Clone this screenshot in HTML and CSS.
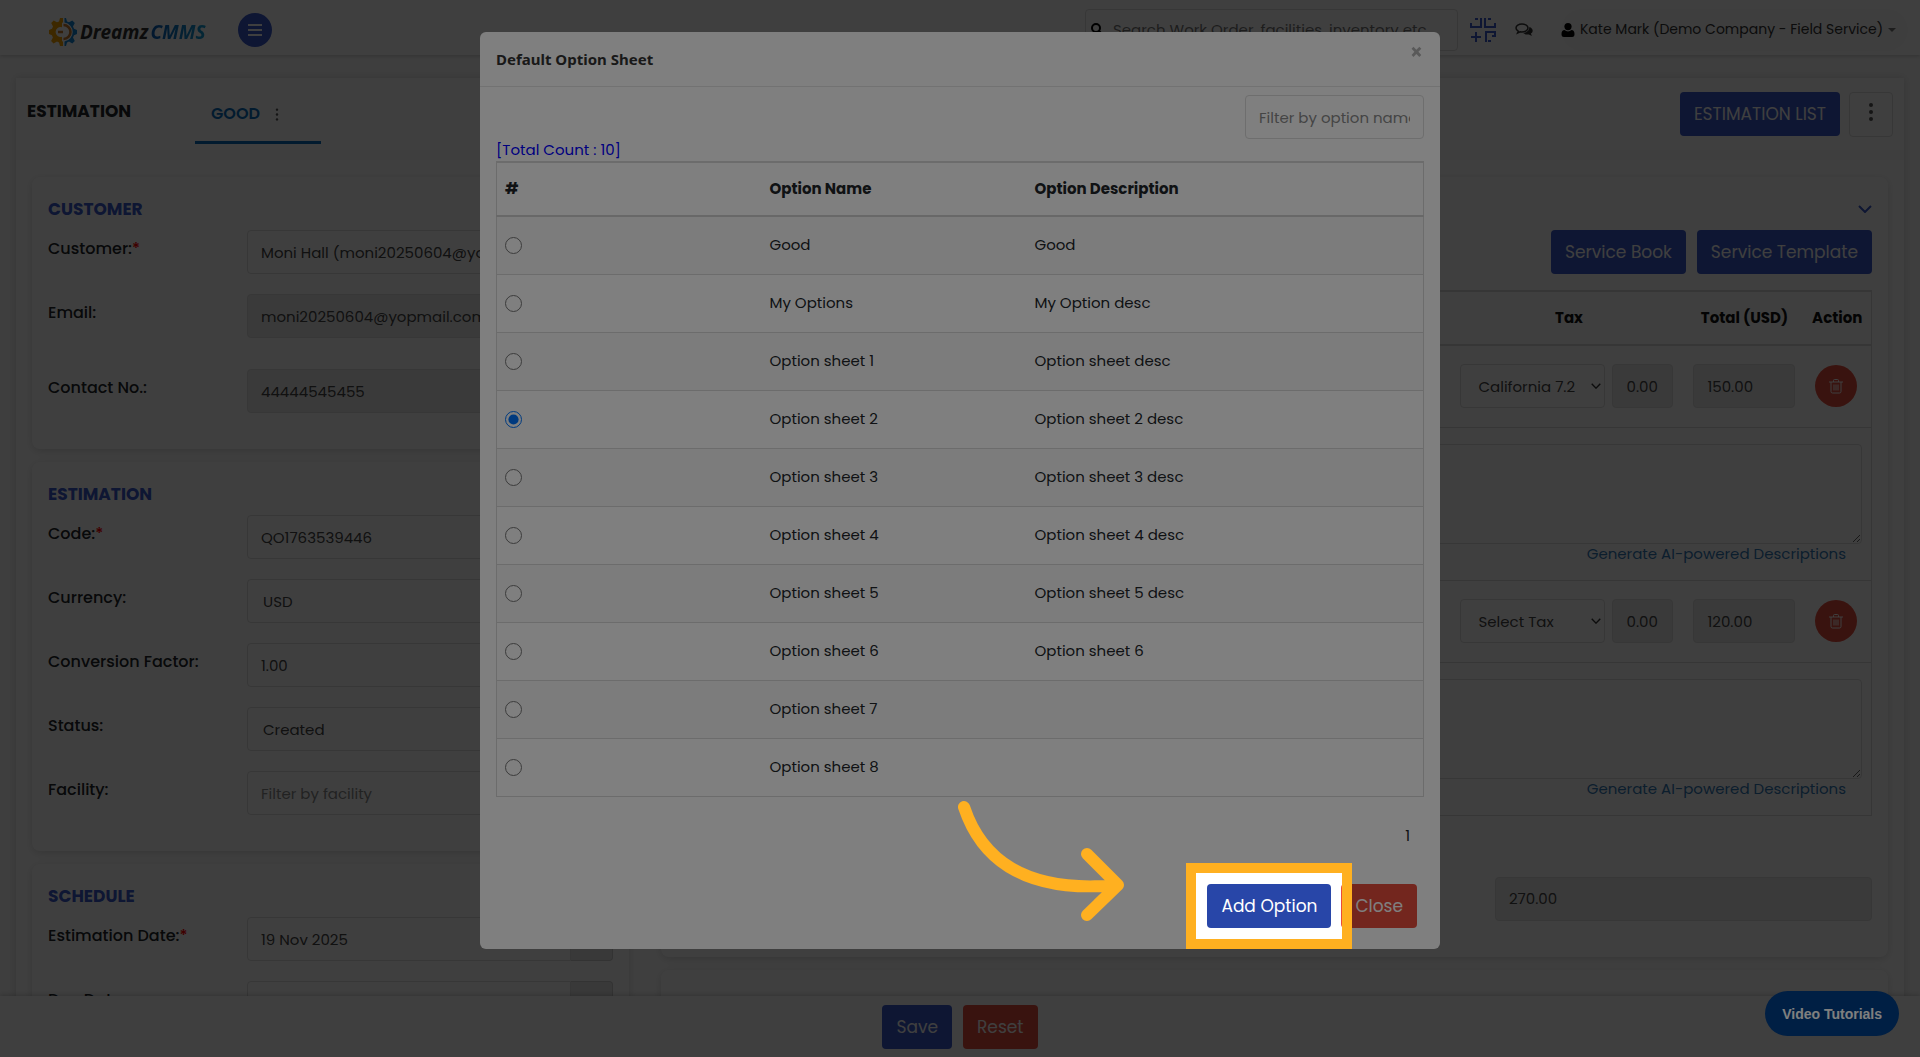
FILE: index.html
```html
<!DOCTYPE html>
<html lang="en">

<head>
    <meta charset="UTF-8">
    <meta name="viewport" content="width=device-width, initial-scale=1.0">
    <title>Dreamz CMMS - Estimation</title>
    <link rel="stylesheet" href="styles.css">
</head>

<body>

    <!-- Icons used more than once -->
    <svg class="icon-defs" aria-hidden="true">
        <symbol id="icon-trash" viewBox="0 0 16 16">
            <path d="M1 4h14M5.500 4V2.500a1 1 0 0 1 1-1h3a1 1 0 0 1 1 1V4M3 4v9.500a1.500 1.500 0 0 0 1.500 1.500h7a1.500 1.500 0 0 0 1.500-1.500V4M6 6.500v6M8 6.500v6M10 6.500v6" />
        </symbol>
        <symbol id="icon-chevron" viewBox="0 0 14 8">
            <path d="M1 1l6 6 6-6" />
        </symbol>
    </svg>

    <header class="topbar">
        <a class="logo" href="#">
            <svg class="logo-gear" viewBox="0 0 30 30" aria-hidden="true">
                <path fill="#f5a300" d="M15 1v4.500l-1 .2v4.500a5 5 0 1 0 0 9.600v4.500l1 .2V29h-3l-1-3.500-2-.9-3.500 1.800-2.400-2.500 1.800-3.300-1-2.400L1 17v-4l3-1.200 1-2.400L3.200 6 5.700 3.500 9 5.300l2-.9L12 1z" />
                <path fill="#1284d6" d="M16.500 1h1.500l1 3.400 2 .9 3.300-1.800L26.800 6 25 9.400l1 2.400 3 1.200v4l-3 1.200-1 2.400 1.800 3.300-2.500 2.500-3.300-1.800-2 .9L18 29h-1.500v-4.500a9.600 9.600 0 0 0 0-19z" />
                <path fill="none" stroke="#c9782c" stroke-width="2.600" d="M15.500 8a7 7 0 0 1 0 14M10 15h5" />
            </svg>
            <span class="logo-name">Dreamz</span>
            <span class="logo-product">CMMS</span>
        </a>
        <button class="menu-btn" type="button" aria-label="Menu">
            <svg viewBox="0 0 14 12" aria-hidden="true"><path d="M0 1h14M0 6h14M0 11h14" /></svg>
        </button>

        <div class="topbar-right">
            <div class="search">
                <svg viewBox="0 0 16 16" aria-hidden="true"><circle cx="6" cy="6" r="4" /><path d="M9 9l5 5" /></svg>
                <input type="text" placeholder="Search Work Order, facilities, inventory etc" aria-label="Search">
            </div>
            <svg class="scan-icon" viewBox="0 0 26 26" aria-hidden="true">
                <path d="M1 6V10H11V1M5 2H8M15 1V10H25V6M18 2H21M6 15V25M1 20H11M16 25V15H25V19H22M18 24H21" />
            </svg>
            <svg class="chat-icon" viewBox="0 0 18 14" aria-hidden="true">
                <path class="chat-line" d="M7 1C3.700 1 1 2.800 1 5c0 1.300.9 2.400 2.200 3.200L2.500 10l2.600-1.200C9.500 9.400 13 7.600 13 5c0-2.200-2.700-4-6-4z" />
                <path class="chat-fill" d="M14.300 4c2 .6 3.400 2 3.400 3.700 0 1.200-.7 2.200-1.800 2.900l1 2.400-3-1.500c-2.300.3-4.600-.3-5.700-1.500C11.800 9.700 14.500 7.500 14.300 4z" />
            </svg>
            <button class="user-btn" type="button">
                <svg class="user-icon" viewBox="0 0 14 14" aria-hidden="true"><circle cx="7" cy="3.600" r="3.600" /><path d="M.5 11c0-2.600 1.200-4 3-4a5 5 0 0 0 7 0c1.800 0 3 1.400 3 4 0 2-.6 3-2.500 3H3C1.100 14 .5 13 .5 11z" /></svg>
                Kate Mark (Demo Company - Field Service)
                <svg class="caret" viewBox="0 0 8 4" aria-hidden="true"><path d="M0 0h8L4 4z" /></svg>
            </button>
        </div>
    </header>

    <main class="page">
        <!-- Title and tabs -->
        <div class="page-head">
            <h1>ESTIMATION</h1>
            <div class="tab">
                <a href="#">GOOD</a>
                <svg class="dots dots-small" viewBox="0 0 4 16" aria-hidden="true"><circle cx="2" cy="2" r="1.500" /><circle cx="2" cy="8" r="1.500" /><circle cx="2" cy="14" r="1.500" /></svg>
            </div>
            <div class="page-actions">
                <button class="btn btn-primary" type="button">ESTIMATION LIST</button>
                <button class="more-btn" type="button" aria-label="More">
                    <svg class="dots" viewBox="0 0 4 18" aria-hidden="true"><circle cx="2" cy="2" r="2" /><circle cx="2" cy="9" r="2" /><circle cx="2" cy="16" r="2" /></svg>
                </button>
            </div>
        </div>

        <div class="page-body">
            <form class="side">
                <section class="card">
                    <h2>CUSTOMER</h2>
                    <div class="field">
                        <label for="customer">Customer:<span class="req">*</span></label>
                        <input class="control" type="text" id="customer" value="Moni Hall (moni20250604@yopmail.com)">
                    </div>
                    <div class="field field-tall">
                        <label for="email">Email:</label>
                        <input class="control" type="text" id="email" value="moni20250604@yopmail.com" readonly>
                    </div>
                    <div class="field">
                        <label for="contact">Contact No.:</label>
                        <input class="control" type="text" id="contact" value="44444545455" readonly>
                    </div>
                </section>

                <section class="card">
                    <h2>ESTIMATION</h2>
                    <div class="field">
                        <label for="code">Code:<span class="req">*</span></label>
                        <input class="control" type="text" id="code" value="QO1763539446">
                    </div>
                    <div class="field">
                        <label for="currency">Currency:</label>
                        <select class="control" id="currency">
                            <option>USD</option>
                        </select>
                    </div>
                    <div class="field">
                        <label for="factor">Conversion Factor:</label>
                        <input class="control" type="text" id="factor" value="1.00">
                    </div>
                    <div class="field">
                        <label for="status">Status:</label>
                        <select class="control" id="status">
                            <option>Created</option>
                        </select>
                    </div>
                    <div class="field">
                        <label for="facility">Facility:</label>
                        <input class="control" type="text" id="facility" placeholder="Filter by facility">
                    </div>
                </section>

                <section class="card">
                    <h2>SCHEDULE</h2>
                    <div class="field">
                        <label for="est-date">Estimation Date:<span class="req">*</span></label>
                        <div class="date-group">
                            <input class="control" type="text" id="est-date" value="19 Nov 2025">
                            <button type="button" aria-label="Pick date"></button>
                        </div>
                    </div>
                    <div class="field">
                        <label for="due-date">Due Date:</label>
                        <div class="date-group">
                            <input class="control" type="text" id="due-date">
                            <button type="button" aria-label="Pick date"></button>
                        </div>
                    </div>
                </section>
            </form>

            <div class="content">
                <section class="card">
                    <div class="card-toggle">
                        <svg class="chevron" aria-hidden="true"><use href="#icon-chevron" /></svg>
                    </div>
                    <div class="card-actions">
                        <button class="btn btn-primary" type="button">Service Book</button>
                        <button class="btn btn-primary" type="button">Service Template</button>
                    </div>

                    <table class="items">
                        <colgroup>
                            <col>
                            <col class="col-tax">
                            <col class="col-total">
                            <col class="col-action">
                        </colgroup>
                        <thead>
                            <tr>
                                <th></th>
                                <th>Tax</th>
                                <th>Total (USD)</th>
                                <th>Action</th>
                            </tr>
                        </thead>
                        <tbody>
                            <tr class="item-row">
                                <td></td>
                                <td>
                                    <div class="tax">
                                        <div class="select-wrap">
                                            <select class="control" aria-label="Tax">
                                                <option>California 7.2</option>
                                            </select>
                                            <svg class="chevron" aria-hidden="true"><use href="#icon-chevron" /></svg>
                                        </div>
                                        <input class="control tax-amount" type="text" value="0.00" aria-label="Tax amount" readonly>
                                    </div>
                                </td>
                                <td><input class="control" type="text" value="150.00" aria-label="Total" readonly></td>
                                <td><button class="delete-btn" type="button" aria-label="Delete"><svg aria-hidden="true"><use href="#icon-trash" /></svg></button></td>
                            </tr>
                            <tr class="desc-row">
                                <td colspan="4">
                                    <textarea class="control" aria-label="Description"></textarea>
                                    <a href="#">Generate AI-powered Descriptions</a>
                                </td>
                            </tr>
                            <tr class="item-row">
                                <td></td>
                                <td>
                                    <div class="tax">
                                        <div class="select-wrap">
                                            <select class="control" aria-label="Tax">
                                                <option>Select Tax</option>
                                            </select>
                                            <svg class="chevron" aria-hidden="true"><use href="#icon-chevron" /></svg>
                                        </div>
                                        <input class="control tax-amount" type="text" value="0.00" aria-label="Tax amount" readonly>
                                    </div>
                                </td>
                                <td><input class="control" type="text" value="120.00" aria-label="Total" readonly></td>
                                <td><button class="delete-btn" type="button" aria-label="Delete"><svg aria-hidden="true"><use href="#icon-trash" /></svg></button></td>
                            </tr>
                            <tr class="desc-row">
                                <td colspan="4">
                                    <textarea class="control" aria-label="Description"></textarea>
                                    <a href="#">Generate AI-powered Descriptions</a>
                                </td>
                            </tr>
                        </tbody>
                    </table>

                    <div class="grand-total">
                        <input class="control" type="text" value="270.00" aria-label="Grand total" readonly>
                    </div>
                </section>

                <section class="card card-next"></section>
            </div>
        </div>
    </main>

    <footer class="form-footer">
        <button class="btn btn-primary" type="button">Save</button>
        <button class="btn btn-danger" type="button">Reset</button>
    </footer>

    <div class="backdrop"></div>
    <button class="video-btn" type="button">Video Tutorials</button>

    <!-- Default option sheet dialog -->
    <div class="modal" role="dialog" aria-labelledby="modal-title">
        <div class="modal-head">
            <h3 id="modal-title">Default Option Sheet</h3>
            <button class="close-x" type="button" aria-label="Close">×</button>
        </div>
        <div class="modal-body">
            <input class="control filter" type="text" placeholder="Filter by option name" aria-label="Filter by option name">
            <p class="count">[Total Count : 10]</p>
            <table class="options">
                <thead>
                    <tr>
                        <th>#</th>
                        <th>Option Name</th>
                        <th>Option Description</th>
                    </tr>
                </thead>
                <tbody>
                    <tr>
                        <td><input type="radio" name="option" id="opt1"></td>
                        <td><label for="opt1">Good</label></td>
                        <td>Good</td>
                    </tr>
                    <tr>
                        <td><input type="radio" name="option" id="opt2"></td>
                        <td><label for="opt2">My Options</label></td>
                        <td>My Option desc</td>
                    </tr>
                    <tr>
                        <td><input type="radio" name="option" id="opt3"></td>
                        <td><label for="opt3">Option sheet 1</label></td>
                        <td>Option sheet desc</td>
                    </tr>
                    <tr>
                        <td><input type="radio" name="option" id="opt4" checked></td>
                        <td><label for="opt4">Option sheet 2</label></td>
                        <td>Option sheet 2 desc</td>
                    </tr>
                    <tr>
                        <td><input type="radio" name="option" id="opt5"></td>
                        <td><label for="opt5">Option sheet 3</label></td>
                        <td>Option sheet 3 desc</td>
                    </tr>
                    <tr>
                        <td><input type="radio" name="option" id="opt6"></td>
                        <td><label for="opt6">Option sheet 4</label></td>
                        <td>Option sheet 4 desc</td>
                    </tr>
                    <tr>
                        <td><input type="radio" name="option" id="opt7"></td>
                        <td><label for="opt7">Option sheet 5</label></td>
                        <td>Option sheet 5 desc</td>
                    </tr>
                    <tr>
                        <td><input type="radio" name="option" id="opt8"></td>
                        <td><label for="opt8">Option sheet 6</label></td>
                        <td>Option sheet 6</td>
                    </tr>
                    <tr>
                        <td><input type="radio" name="option" id="opt9"></td>
                        <td><label for="opt9">Option sheet 7</label></td>
                        <td></td>
                    </tr>
                    <tr>
                        <td><input type="radio" name="option" id="opt10"></td>
                        <td><label for="opt10">Option sheet 8</label></td>
                        <td></td>
                    </tr>
                </tbody>
            </table>
            <div class="pager">1</div>
        </div>
        <div class="modal-foot">
            <div class="tour-target">
                <button class="btn btn-primary" type="button">Add Option</button>
                <!-- Tour highlight, its shadow dims the rest of the page -->
                <div class="tour-box"></div>
                <svg class="tour-arrow" viewBox="0 0 168 122" aria-hidden="true">
                    <path d="M7 7C24 58 66 94 161 85M130 54L161 85L130 115" />
                </svg>
            </div>
            <button class="btn btn-danger" type="button">Close</button>
        </div>
    </div>

</body>

</html>
```
FILE: styles.css
```css
* {
    box-sizing: border-box;
}

body {
    margin: 0;
    height: 100vh;
    overflow: hidden;
    background-color: #fafafa;
    color: #212529;
    font-family: Poppins, Inter, sans-serif;
    font-size: 15px;
    line-height: 24px;
}

h1,
h2,
h3,
p {
    margin: 0;
}

a {
    color: #337ab7;
    text-decoration: none;
}

button,
input,
select,
textarea {
    font-family: inherit;
}

.icon-defs {
    display: none;
}

/* Buttons and form controls */
.btn {
    height: 44px;
    padding: 0 14px;
    border: none;
    border-radius: 4px;
    color: #fff;
    font-size: 17px;
    cursor: pointer;
}

.btn-primary {
    background-color: #2846a8;
}

.btn-danger {
    background-color: #e74c3c;
}

.page .btn-primary,
.form-footer .btn-primary {
    background-color: #3858cc;
}

.control {
    width: 100%;
    height: 44px;
    padding: 0 13px;
    border: 1px solid #dcdcdc;
    border-radius: 4px;
    background-color: #fff;
    color: #444;
    font-size: 15px;
    appearance: none;
}

.control::placeholder {
    color: #8a8a8a;
}

.control:read-only:not(select) {
    background-color: #ebebeb;
}

select.control {
    padding: 0 15px;
}

/* Top bar */
.topbar {
    display: flex;
    align-items: center;
    height: 55px;
    padding: 4px 12px 0 48px;
    background-color: #fff;
    box-shadow: 0 1px 4px rgba(0, 0, 0, 0.2);
}

.logo {
    display: flex;
    align-items: center;
    gap: 2px;
    padding-top: 4px;
    font: italic bold 19px "Noto Sans", sans-serif;
}

.logo-gear {
    width: 30px;
    height: 30px;
}

.logo-name {
    color: #333;
}

.logo-product {
    background: linear-gradient(90deg, #0a5bb8, #14a0d8);
    background-clip: text;
    color: transparent;
}

.menu-btn {
    display: flex;
    align-items: center;
    justify-content: center;
    width: 34px;
    height: 34px;
    margin-left: 32px;
    border: none;
    border-radius: 50%;
    background-color: #3858cc;
}

.menu-btn svg {
    width: 14px;
    height: 12px;
    stroke: #fff;
    stroke-width: 2;
}

.topbar-right {
    display: flex;
    align-items: center;
    margin-left: auto;
}

.search {
    display: flex;
    align-items: center;
    width: 373px;
    height: 42px;
    padding-left: 4px;
    border: 1px solid #dcdcdc;
    border-radius: 4px;
}

.search svg {
    width: 16px;
    height: 16px;
    fill: none;
    stroke: #000;
    stroke-width: 2;
}

.search input {
    flex: 1;
    min-width: 0;
    padding: 0 7px;
    border: none;
    background: none;
    font-size: 15px;
}

.search input::placeholder {
    color: #777;
}

.scan-icon {
    width: 26px;
    height: 26px;
    margin-left: 12px;
    fill: none;
    stroke: #3858cc;
    stroke-width: 2;
}

.chat-icon {
    width: 18px;
    height: 14px;
    margin-left: 19px;
}

.chat-line {
    fill: none;
    stroke: #333;
    stroke-width: 1.500;
}

.chat-fill {
    fill: #333;
}

.user-btn {
    display: flex;
    align-items: center;
    gap: 5px;
    height: 42px;
    margin-left: 28px;
    padding: 0 12px 0 0;
    border: none;
    border-radius: 21px;
    background-color: #fafafa;
    color: #333;
    font-size: 14px;
}

.user-icon {
    width: 14px;
    height: 14px;
}

.caret {
    width: 8px;
    height: 4px;
    fill: #777;
}

/* Page */
.page {
    margin: 23px 16px 0;
    background-color: #fff;
    box-shadow: 0 0 8px rgba(0, 0, 0, 0.15);
}

.page-head {
    display: flex;
    align-items: flex-start;
    height: 82px;
    padding: 14px 11px 0;
    border-bottom: 10px solid #fafafa;
}

.page-head h1 {
    font-size: 17px;
    font-weight: 700;
    line-height: 38px;
}

.tab {
    display: flex;
    align-items: center;
    gap: 15px;
    width: 126px;
    height: 52px;
    margin-left: 64px;
    padding: 0 16px 5px;
    border-bottom: 3px solid #0a6ebd;
}

.tab a {
    color: #0a6ebd;
    font-size: 16px;
    font-weight: 600;
}

.dots {
    width: 4px;
    height: 18px;
    fill: #555;
}

.dots-small {
    height: 13px;
    width: 4px;
}

.page-actions {
    display: flex;
    gap: 9px;
    margin-left: auto;
}

.more-btn {
    width: 44px;
    height: 45px;
    padding: 0;
    border: 1px solid #dcdcdc;
    border-radius: 4px;
    background-color: #fff;
}

.page-body {
    display: grid;
    grid-template-columns: 37fr 76fr;
    gap: 32px;
    padding: 17px 16px 0;
}

.card {
    margin-bottom: 13px;
    padding: 18px 16px 16px;
    border-radius: 8px;
    background-color: #fff;
    box-shadow: 0 2px 8px rgba(0, 0, 0, 0.15);
}

.card h2 {
    margin-bottom: 7px;
    color: #3858cc;
    font-size: 17px;
    font-weight: 700;
    line-height: 28px;
}

.field {
    display: grid;
    grid-template-columns: 199px 1fr;
    height: 64px;
}

.field-tall {
    height: 75px;
}

.field label {
    font-size: 16px;
    font-weight: 500;
    line-height: 38px;
}

.req {
    color: #f00;
}

.date-group {
    display: flex;
    height: 44px;
}

.date-group .control {
    border-radius: 4px 0 0 4px;
}

.date-group button {
    flex: 0 0 42px;
    border: 1px solid #ccc;
    border-left: none;
    border-radius: 0 4px 4px 0;
    background-color: #e6e6e6;
}

/* Line items */
.card-toggle {
    display: flex;
    align-items: center;
    justify-content: flex-end;
    height: 28px;
    margin-bottom: 7px;
}

.chevron {
    width: 14px;
    height: 8px;
    fill: none;
    stroke: #3858cc;
    stroke-width: 2;
}

.card-actions {
    display: flex;
    justify-content: flex-end;
    gap: 11px;
    margin-bottom: 16px;
}

.items {
    width: 100%;
    table-layout: fixed;
    border: 1px solid #d8d8d8;
    border-collapse: collapse;
}

.items .col-tax {
    width: 233px;
}

.items .col-total {
    width: 118px;
}

.items .col-action {
    width: 68px;
}

.items th {
    height: 54px;
    padding: 0;
    border-top: 2px solid #d8d8d8;
    border-bottom: 2px solid #d8d8d8;
    color: #111;
    font-weight: 700;
}

.items td {
    padding: 0 8px;
    border-bottom: 1px solid #d8d8d8;
}

.item-row {
    height: 82px;
}

.tax {
    display: flex;
    gap: 7px;
}

.tax-amount {
    flex: 0 0 61px;
}

.select-wrap {
    position: relative;
    flex: 0 0 145px;
}

.select-wrap .control {
    padding: 0 17px;
}

.select-wrap .chevron {
    position: absolute;
    top: 19px;
    right: 4px;
    width: 10px;
    height: 6px;
    stroke: #333;
}

.delete-btn {
    display: flex;
    align-items: center;
    justify-content: center;
    width: 42px;
    height: 42px;
    margin-left: 4px;
    padding: 0;
    border: none;
    border-radius: 50%;
    background-color: #e74c3c;
}

.delete-btn svg {
    width: 16px;
    height: 16px;
    fill: none;
    stroke: #fff;
}

.items .desc-row td {
    height: 153px;
    padding: 16px 9px 0;
    text-align: right;
    vertical-align: top;
}

.desc-row textarea {
    display: block;
    height: 100px;
    resize: vertical;
}

.desc-row a {
    display: block;
    padding-right: 16px;
    line-height: 20px;
}

.grand-total {
    display: flex;
    justify-content: flex-end;
    margin: 61px 0 20px;
}

.grand-total .control {
    width: 377px;
}

.card-next {
    height: 120px;
}

/* Sticky footer */
.form-footer {
    position: fixed;
    right: 0;
    bottom: 0;
    left: 0;
    display: flex;
    justify-content: center;
    gap: 11px;
    height: 61px;
    padding-top: 9px;
    background-color: #fff;
    box-shadow: 0 -1px 5px rgba(0, 0, 0, 0.2);
}

.backdrop {
    position: fixed;
    inset: 0;
    z-index: 10;
    background-color: rgba(0, 0, 0, 0.5);
}

.video-btn {
    position: fixed;
    right: 21px;
    bottom: 21px;
    z-index: 15;
    height: 45px;
    padding: 0 17px;
    border: none;
    border-radius: 23px;
    background-color: #003e88;
    color: #fff;
    font: bold 14px "Liberation Sans", sans-serif;
}

/* Dialog */
.modal {
    position: fixed;
    top: 32px;
    left: 25%;
    z-index: 20;
    width: 50%;
    border-radius: 6px;
    background-color: #fff;
}

.modal-head {
    display: flex;
    justify-content: space-between;
    height: 55px;
    padding: 0 17px 0 16px;
    border-bottom: 1px solid #e5e5e5;
}

.modal-head h3 {
    color: #333;
    font: 700 15px/54px "Noto Sans", sans-serif;
}

.close-x {
    height: 38px;
    padding: 0;
    border: none;
    background: none;
    color: #000;
    font: 900 22px "Noto Sans", sans-serif;
    opacity: 0.3;
}

.modal-body {
    display: flex;
    flex-direction: column;
    padding: 8px 16px 0;
}

.filter {
    align-self: flex-end;
    width: 179px;
}

.count {
    height: 22px;
    color: #00f;
    line-height: 22px;
}

.options {
    width: 100%;
    border: 1px solid #d8d8d8;
    border-collapse: collapse;
    table-layout: fixed;
}

.options th {
    height: 54px;
    padding: 0 8px;
    border-top: 2px solid #d8d8d8;
    border-bottom: 2px solid #d0d0d0;
    font-weight: 700;
    text-align: left;
}

.options th:nth-child(1),
.options th:nth-child(2) {
    width: 265px;
}

.options td {
    height: 58px;
    padding: 0 8px;
    border-bottom: 1px solid #d8d8d8;
}

.options tbody tr:nth-child(odd) {
    background-color: #f9f9f9;
}

.options input {
    display: block;
    width: 17px;
    height: 17px;
    margin: 0;
}

.pager {
    padding: 27px 14px 0;
    text-align: right;
}

.modal-foot {
    display: flex;
    justify-content: flex-end;
    gap: 10px;
    padding: 36px 23px 21px;
}

.tour-target {
    position: relative;
}

.tour-box {
    position: absolute;
    inset: -21px;
    border: 10px solid #ffb020;
    box-shadow: 0 0 0 9999px rgba(0, 0, 0, 0.5);
    pointer-events: none;
}

.tour-arrow {
    position: absolute;
    right: 206px;
    bottom: 6px;
    width: 168px;
    height: 122px;
    fill: none;
    stroke: #ffb020;
    stroke-width: 12;
    stroke-linecap: round;
    stroke-linejoin: round;
    pointer-events: none;
}
```
